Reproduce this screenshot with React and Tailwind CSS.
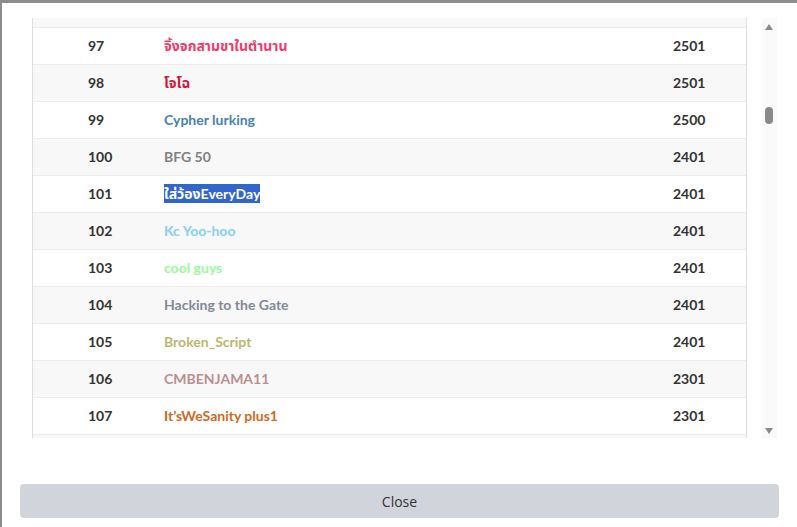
import React from "react";

const rows = [
  { rank: 96, name: "", score: "", color: "" },
  { rank: 97, name: "จิ้งจกสามขาในตำนาน", score: 2501, color: "text-[#f23a6b]" },
  { rank: 98, name: "โจโฉ", score: 2501, color: "text-[#d4143c]" },
  { rank: 99, name: "Cypher lurking", score: 2500, color: "text-[#4682b4]" },
  { rank: 100, name: "BFG 50", score: 2401, color: "text-[#808080]" },
  { rank: 101, name: "ใส่ว้องEveryDay", score: 2401, color: "text-white bg-[#3366cc]", hl: true },
  { rank: 102, name: "Kc Yoo-hoo", score: 2401, color: "text-[#87cefa]" },
  { rank: 103, name: "cool guys", score: 2401, color: "text-[#98fb98]" },
  { rank: 104, name: "Hacking to the Gate", score: 2401, color: "text-[#7f8a96]" },
  { rank: 105, name: "Broken_Script", score: 2401, color: "text-[#bdb76b]" },
  { rank: 106, name: "CMBENJAMA11", score: 2301, color: "text-[#bc8f8f]" },
  { rank: 107, name: "It’sWeSanity plus1", score: 2301, color: "text-[#d2691e]" },
];

export default function App() {
  return (
    <div className="w-[797px] h-[527px] bg-white border-t-[3px] border-l-[2px] border-[#8c8c8c] overflow-hidden font-['Lato','Noto_Sans_Thai','Noto_Sans',sans-serif]">
      <div className="flex pl-[30px] pt-[15px] h-[435px]">
        {/* Table box */}
        <div className="w-[715px] h-[420px] border-x border-[#dddddd] overflow-hidden flex flex-col">
          <div className="h-[9px] shrink-0 bg-[#f8f8f8]" />
          {rows.slice(1).map((r, i) => (
            <div
              key={r.rank}
              className={`h-[37px] shrink-0 border-t border-[#ececec] flex items-center pb-[1px] text-[14px] font-bold ${i % 2 === 0 ? "bg-white" : "bg-[#f8f8f8]"}`}
            >
              <div className="w-[131px] pl-[55px] text-[#333333]">{r.rank}</div>
              <div className="flex-1">
                <span className={`${r.color} ${r.hl ? "py-[1px]" : ""}`}>{r.name}</span>
              </div>
              <div className="w-[73px] text-[#333333]">{r.score}</div>
            </div>
          ))}
          <div className="flex-1 border-t border-[#ececec] bg-[#f8f8f8]" />
        </div>
        {/* Scrollbar */}
        <div className="ml-[15px] w-[15px] h-[420px] bg-[#fafafa] relative">
          <div className="absolute left-[3px] top-[6px] w-0 h-0 border-l-[4.5px] border-r-[4.5px] border-b-[6px] border-l-transparent border-r-transparent border-b-[#8a8a8a]" />
          <div className="absolute left-[3px] top-[89px] w-[8px] h-[17px] rounded-full bg-[#8a8a8a]" />
          <div className="absolute left-[3px] bottom-[4px] w-0 h-0 border-l-[4.5px] border-r-[4.5px] border-t-[6px] border-l-transparent border-r-transparent border-t-[#8a8a8a]" />
        </div>
      </div>
      <div className="px-[18px] mt-[46px]">
        <button className="w-[759px] h-[34px] rounded-[4px] bg-[#d1d5db] text-[14px] text-[#333333] font-['Open_Sans',sans-serif]">
          Close
        </button>
      </div>
    </div>
  );
}
